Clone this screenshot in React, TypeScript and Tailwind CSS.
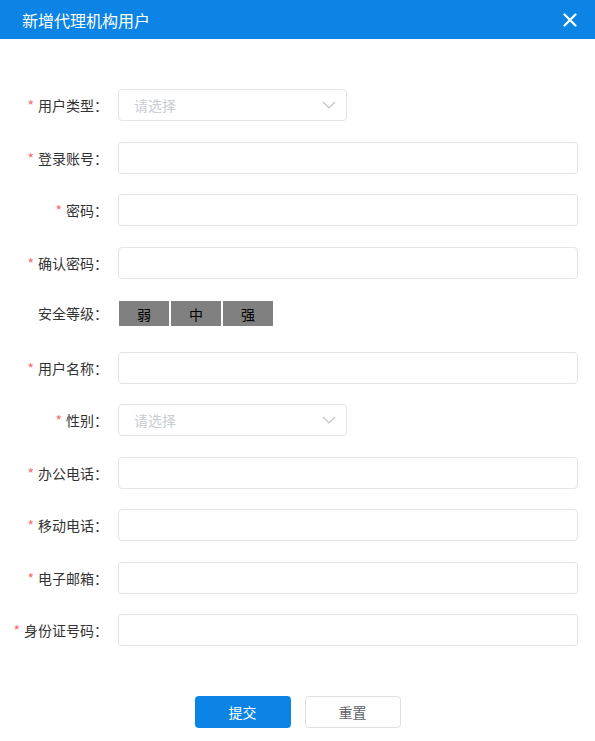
import { useState } from "react";

const font = { fontFamily: '"Noto Sans CJK SC", "Noto Sans", sans-serif' };

type Field = { label: string; kind: "input" | "select" | "level"; required?: boolean };

const fields: Field[] = [
    { label: "用户类型", kind: "select", required: true },
    { label: "登录账号", kind: "input", required: true },
    { label: "密码", kind: "input", required: true },
    { label: "确认密码", kind: "input", required: true },
    { label: "安全等级", kind: "level" },
    { label: "用户名称", kind: "input", required: true },
    { label: "性别", kind: "select", required: true },
    { label: "办公电话", kind: "input", required: true },
    { label: "移动电话", kind: "input", required: true },
    { label: "电子邮箱", kind: "input", required: true },
    { label: "身份证号码", kind: "input", required: true },
]

const Select = () => (
    <div className="w-[229px] h-8 border border-[#e2e4ea] rounded flex items-center justify-between pl-[15px] pr-[10px]">
        <span className="text-sm text-[#c9ccd3]">请选择</span>
        <svg width="14" height="8" viewBox="0 0 14 8" fill="none" stroke="#c0c4cc" strokeWidth="1.2">
            <path d="M1 1l6 6 6-6" />
        </svg>
    </div>
)

const App = () => {
    const [values, setValues] = useState<Record<string, string>>({})

    return (
        <div className="w-[595px] h-[741px] bg-white" style={font}>
            <div className="h-[39px] bg-[#0b84e5] flex items-center justify-between pl-[22px] pr-[18px]">
                <span className="text-base text-white">新增代理机构用户</span>
                <svg width="14" height="14" viewBox="0 0 14 14" stroke="white" strokeWidth="2.2" strokeLinecap="round">
                    <path d="M1.5 1.5l11 11M12.5 1.5l-11 11" />
                </svg>
            </div>

            <div className="pt-[50px] pl-[6px] pr-[17px] flex flex-col gap-y-[20.5px]">
                {fields.map((f) => (
                    <div key={f.label} className="flex h-8 items-center">
                        <label
                            className={
                                "w-[102px] shrink-0 text-right text-sm text-[#333] flex justify-end " +
                                (f.kind === "level" ? "self-start pt-[4px]" : "items-center")
                            }
                        >
                            {f.required && <span className="text-[#f56c6c] mr-1">*</span>}
                            {f.label}：
                        </label>
                        <div className="ml-[10px] flex-1">
                            {f.kind === "select" && <Select />}
                            {f.kind === "input" && (
                                <input
                                    className="w-full h-8 border border-[#e2e4ea] rounded px-[15px] text-sm text-[#606266] outline-none"
                                    value={values[f.label] || ''}
                                    onChange={(e) => setValues({ ...values, [f.label]: e.target.value })}
                                />
                            )}
                            {f.kind === "level" && (
                                <div className="flex gap-[2px] ml-px -mt-[3px]">
                                    {["弱", "中", "强"].map((l) => (
                                        <div key={l} className="w-[50px] h-[25px] bg-[#808080] text-sm text-black flex items-center justify-center">
                                            {l}
                                        </div>
                                    ))}
                                </div>
                            )}
                        </div>
                    </div>
                ))}
            </div>

            <div className="mt-[50px] flex justify-center gap-[14px]">
                <button className="w-[96px] h-8 rounded bg-[#0b84e5] text-white text-sm">提交</button>
                <button className="w-[96px] h-8 rounded border border-[#dcdfe6] bg-white text-[#606266] text-sm">重置</button>
            </div>
        </div>
    )
}

export default App
